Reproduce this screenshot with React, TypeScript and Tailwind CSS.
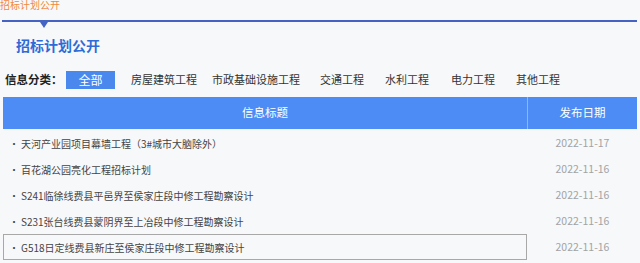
import React from "react";

const cats = [
  { t: "房屋建筑工程", ml: "ml-[16px]" },
  { t: "市政基础设施工程", ml: "ml-[15px]" },
  { t: "交通工程", ml: "ml-[20px]" },
  { t: "水利工程", ml: "ml-[21px]" },
  { t: "电力工程", ml: "ml-[22px]" },
  { t: "其他工程", ml: "ml-[21px]" },
];

const rows = [
  { t: "天河产业园项目幕墙工程（3#城市大脑除外）", d: "2022-11-17" },
  { t: "百花湖公园亮化工程招标计划", d: "2022-11-16" },
  { t: "S241临徐线费县平邑界至侯家庄段中修工程勘察设计", d: "2022-11-16" },
  { t: "S231张台线费县蒙阴界至上冶段中修工程勘察设计", d: "2022-11-16" },
  { t: "G518日定线费县新庄至侯家庄段中修工程勘察设计", d: "2022-11-16", hover: true },
];

export default function App() {
  return (
    <div
      className="w-[640px] h-[263px] overflow-hidden bg-[#f7f8fa] text-[#333]"
      style={{ fontFamily: '"Noto Sans CJK SC", "Noto Sans", sans-serif' }}
    >
      <div className="h-[21px]">
        <div className="text-[10px] leading-[12px] -mt-[1px] text-[#f0883e]">招标计划公开</div>
      </div>
      <div className="relative h-[2px] ml-[2px] mr-[3px] bg-[#4463c2]">
        <div className="absolute left-[38px] top-[2px] w-0 h-0 border-l-[4px] border-r-[4px] border-t-[6px] border-l-transparent border-r-transparent border-t-[#4463c2]" />
      </div>
      <div className="mt-[13px] pl-[16px] h-[20px] leading-[20px] text-[14px] font-bold text-[#2f6bd6]">
        招标计划公开
      </div>
      <div className="mt-[15px] h-[19px] flex items-center pl-[5px] text-[11px]">
        <span className="font-bold text-[11.5px] text-[#222] w-[61px]">信息分类：</span>
        <span className="w-[49px] h-[18px] flex items-center justify-center bg-[#4a88ee] text-white text-[12px]">
          全部
        </span>
        {cats.map((c) => (
          <span key={c.t} className={`${c.ml} text-[#333]`}>
            {c.t}
          </span>
        ))}
      </div>
      <div className="mt-[8px] ml-[3px] w-[634px]">
        <div className="flex h-[32px] bg-[#4d8cf4] text-white text-[11.5px]">
          <div className="w-[524px] flex items-center justify-center">信息标题</div>
          <div className="w-[1px] bg-[#8fb5f7]" />
          <div className="flex-1 flex items-center justify-center">发布日期</div>
        </div>
        <div className="h-[1px] bg-[#eef5ee]" />
        {rows.map((r) => (
          <div key={r.t} className="flex h-[26px] text-[10px]">
            <div
              className={`w-[524px] flex items-center pl-[5px] border ${
                r.hover ? "border-[#a8a8a8]" : "border-transparent"
              } text-[#444]`}
            >
              <span className="w-[12px]">•</span>
              <span>{r.t}</span>
            </div>
            <div className="w-[1px]" />
            <div className="flex-1 flex items-center justify-center text-[10.5px] text-[#a3a3a3]">{r.d}</div>
          </div>
        ))}
      </div>
    </div>
  );
}
